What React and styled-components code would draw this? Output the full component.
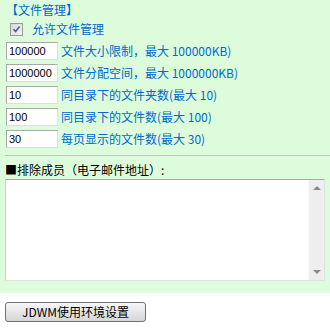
import React from "react";
import styled, { createGlobalStyle } from "styled-components";

const Global = createGlobalStyle`
  html, body { margin: 0; padding: 0; background: #ffffff; }
  body { font-family: "Noto Sans CJK SC", "Noto Sans", sans-serif; font-size: 12px; }
`;

const Panel = styled.div`
  background: #dcfcdc;
  padding: 2px 0 12px 0;
`;

const Title = styled.div`
  color: #0068d0;
  line-height: 16px;
  padding-left: 6px;
`;

const CheckRow = styled.label`
  display: flex;
  align-items: center;
  height: 22px;
  padding-left: 10px;
  gap: 9px;
  color: #0068d0;
  line-height: 16px;
`;

const CheckBox = styled.span`
  width: 11px;
  height: 11px;
  border: 1px solid #9a9a9a;
  background: linear-gradient(135deg, #d8d8d8, #f4f4f4);
  display: flex;
  align-items: center;
  justify-content: center;
`;

const FieldRow = styled.div`
  display: flex;
  align-items: center;
  height: 22px;
  padding-left: 6px;
  gap: 3px;
  color: #0068d0;
  line-height: 16px;
  white-space: nowrap;
`;

const NumInput = styled.input`
  box-sizing: border-box;
  width: 52px;
  height: 18px;
  margin: 0;
  padding: 0 2px;
  border: 1px solid;
  border-color: #a8a8a8 #dedede #dedede #a8a8a8;
  background: #ffffff;
  font-family: "Liberation Sans", Arial, sans-serif;
  font-size: 11px;
  color: #000000;
  outline: none;
`;

const Rule = styled.div`
  margin: 5px 0 0 5px;
  border-top: 1px solid #c4c4c4;
`;

const SectionLabel = styled.div`
  color: #000000;
  line-height: 18px;
  padding: 5px 0 0 5px;
`;

const AreaBox = styled.div`
  box-sizing: border-box;
  margin-left: 5px;
  width: 320px;
  height: 102px;
  display: flex;
  background: #ffffff;
  border: 1px solid;
  border-color: #a8a8a8 #e2e2e2 #e2e2e2 #d0d0d0;
`;

const AreaText = styled.div`
  flex: 1;
`;

const ScrollBar = styled.div`
  width: 15px;
  background: #eeeeee;
  border-left: 1px solid #f8f8f8;
  display: flex;
  flex-direction: column;
  justify-content: space-between;
  align-items: center;
  padding: 6px 0 6px 0;
`;

const Arrow = styled.span`
  width: 0;
  height: 0;
  border-left: 4px solid transparent;
  border-right: 4px solid transparent;
  ${(p) =>
    p.$down
      ? "border-top: 4px solid #8c8c8c;"
      : "border-bottom: 4px solid #8c8c8c;"}
`;

const ButtonArea = styled.div`
  padding: 9px 0 0 5px;
`;

const Button = styled.button`
  box-sizing: border-box;
  width: 141px;
  height: 20px;
  margin: 0;
  padding: 0;
  border: 1px solid #707070;
  border-radius: 3px;
  background: linear-gradient(#f6f6f6, #e6e6e6 50%, #d6d6d6);
  font-family: "Noto Sans CJK SC", sans-serif;
  font-size: 12px;
  line-height: 16px;
  color: #000000;
`;

const fields = [
  ["100000", "文件大小限制，最大 100000KB)"],
  ["1000000", "文件分配空间，最大 1000000KB)"],
  ["10", "同目录下的文件夹数(最大 10)"],
  ["100", "同目录下的文件数(最大 100)"],
  ["30", "每页显示的文件数(最大 30)"],
];

export default function App() {
  return (
    <>
      <Global />
      <Panel>
        <Title>【文件管理】</Title>
        <CheckRow>
          <CheckBox>
            <svg width="9" height="9" viewBox="0 0 9 9">
              <path d="M1.5 4.2 L3.6 6.6 L7.6 1.6" fill="none" stroke="#4e5f96" strokeWidth="1.6" />
            </svg>
          </CheckBox>
          允许文件管理
        </CheckRow>
        {fields.map(([v, t]) => (
          <FieldRow key={v}>
            <NumInput defaultValue={v} />
            <span>{t}</span>
          </FieldRow>
        ))}
        <Rule />
        <SectionLabel>■排除成员（电子邮件地址）:</SectionLabel>
        <AreaBox>
          <AreaText />
          <ScrollBar>
            <Arrow />
            <Arrow $down />
          </ScrollBar>
        </AreaBox>
      </Panel>
      <ButtonArea>
        <Button>JDWM使用环境设置</Button>
      </ButtonArea>
    </>
  );
}
